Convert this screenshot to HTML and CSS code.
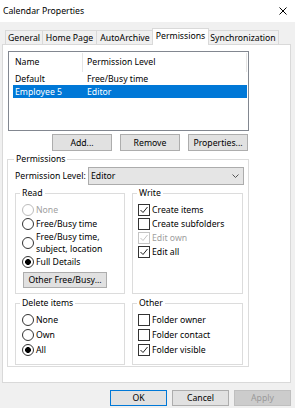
FILE: index.html
```html
<!DOCTYPE html>
<html>
<head>
<meta charset="utf-8">
<link rel="stylesheet" href="styles.css">
</head>
<body>
<div class="window">
  <div class="titlebar">
    <span class="title">Calendar Properties</span>
    <svg class="close" viewBox="0 0 8 8"><path d="M0.5 0.5 L7.5 7.5 M7.5 0.5 L0.5 7.5" stroke="#000" stroke-width="1" fill="none"/></svg>
  </div>
  <div class="main">
    <div class="tabs">
      <div class="tab t-general">General</div>
      <div class="tab t-home">Home Page</div>
      <div class="tab t-auto">AutoArchive</div>
      <div class="tab active t-perm">Permissions</div>
      <div class="tab t-sync">Synchronization</div>
    </div>
    <div class="panel">
      <div class="list">
        <div class="list-head">
          <div class="c1 hcol">Name</div>
          <div class="c2 hcol">Permission Level</div>
        </div>
        <div class="row">
          <div class="c1">Default</div>
          <div class="c2">Free/Busy time</div>
        </div>
        <div class="row sel">
          <div class="c1">Employee 5</div>
          <div class="c2">Editor</div>
        </div>
      </div>
      <div class="list-buttons">
        <button class="btn">Add...</button>
        <button class="btn">Remove</button>
        <button class="btn">Properties...</button>
      </div>
      <fieldset class="group perms">
        <legend>Permissions</legend>
        <div class="level-row">
          <span class="level-label">Permission Level:</span>
          <div class="select">
            <span>Editor</span>
            <svg class="chev" viewBox="0 0 7 4"><path d="M0.5 0.5 L3.5 3.5 L6.5 0.5" stroke="#555" stroke-width="1" fill="none"/></svg>
          </div>
        </div>
        <div class="grid">
          <fieldset class="group sub read">
            <legend>Read</legend>
            <div class="opts">
              <div class="opt dis"><span class="radio"></span><span>None</span></div>
              <div class="opt"><span class="radio"></span><span>Free/Busy time</span></div>
              <div class="opt two"><span class="radio"></span><span>Free/Busy time,<br>subject, location</span></div>
              <div class="opt"><span class="radio on"></span><span>Full Details</span></div>
              <button class="btn other-btn">Other Free/Busy...</button>
            </div>
          </fieldset>
          <fieldset class="group sub write">
            <legend>Write</legend>
            <div class="opts">
              <div class="opt ck"><span class="check"><svg viewBox="0 0 10 10"><path d="M1.5 5 L4 7.5 L8.5 2" stroke="#222" stroke-width="1" fill="none"/></svg></span><span>Create items</span></div>
              <div class="opt ck"><span class="check"></span><span>Create subfolders</span></div>
              <div class="opt ck dis"><span class="check"><svg viewBox="0 0 10 10"><path d="M1.5 5 L4 7.5 L8.5 2" stroke="#c4c4c4" stroke-width="1" fill="none"/></svg></span><span>Edit own</span></div>
              <div class="opt ck"><span class="check"><svg viewBox="0 0 10 10"><path d="M1.5 5 L4 7.5 L8.5 2" stroke="#222" stroke-width="1" fill="none"/></svg></span><span>Edit all</span></div>
            </div>
          </fieldset>
          <fieldset class="group sub del">
            <legend>Delete items</legend>
            <div class="opts wide">
              <div class="opt"><span class="radio"></span><span>None</span></div>
              <div class="opt"><span class="radio"></span><span>Own</span></div>
              <div class="opt"><span class="radio on"></span><span>All</span></div>
            </div>
          </fieldset>
          <fieldset class="group sub other">
            <legend>Other</legend>
            <div class="opts wide">
              <div class="opt ck"><span class="check"></span><span>Folder owner</span></div>
              <div class="opt ck"><span class="check"></span><span>Folder contact</span></div>
              <div class="opt ck"><span class="check"><svg viewBox="0 0 10 10"><path d="M1.5 5 L4 7.5 L8.5 2" stroke="#222" stroke-width="1" fill="none"/></svg></span><span>Folder visible</span></div>
            </div>
          </fieldset>
        </div>
      </fieldset>
    </div>
    <div class="footer">
      <button class="btn fbtn ok">OK</button>
      <button class="btn fbtn">Cancel</button>
      <button class="btn fbtn disabled">Apply</button>
    </div>
  </div>
</div>
</body>
</html>
```
FILE: styles.css
```css
* { box-sizing: border-box; }
html, body { margin: 0; padding: 0; }
body {
  background: #f0f0f0;
  font-family: "Noto Sans", "Open Sans", sans-serif;
  font-size: 8.7px;
  color: #000;
  width: 295px;
  height: 408px;
  overflow: hidden;
}
.titlebar {
  height: 22px;
  background: #fff;
  display: flex;
  align-items: center;
  justify-content: space-between;
  padding: 0 8px 0 3px;
}
.title { line-height: 12px; }
.close { width: 8px; height: 8px; display: block; }
.main { padding: 6px 4px 0 2px; }

.tabs {
  display: flex;
  align-items: flex-end;
  height: 16px;
  padding-left: 3px;
  position: relative;
  z-index: 1;
}
.tab {
  height: 14px;
  border: 1px solid #d9d9d9;
  border-bottom: none;
  margin-right: -1px;
  display: flex;
  align-items: center;
  justify-content: center;
  line-height: 12px;
  background: #f0f0f0;
  white-space: nowrap;
}
.t-general { width: 38px; }
.t-home { width: 55px; }
.t-auto { width: 58px; }
.t-perm { width: 57px; }
.t-sync { width: 72px; }
.tab.active {
  height: 17px;
  background: #fff;
  margin-bottom: -1px;
  margin-left: -1px;
  margin-right: -2px;
  padding-bottom: 2px;
  position: relative;
}

.panel {
  background: #fff;
  border: 1px solid #d9d9d9;
  height: 339px;
  padding: 6px 0 0 5px;
}
.list {
  width: 241px;
  height: 80px;
  border: 1px solid #828790;
  background: #fff;
}
.list-head, .row {
  display: flex;
  margin: 0 1px 0 4px;
}
.list-head { height: 20px; align-items: center; }
.row { height: 13px; align-items: center; line-height: 12px; }
.c1 { width: 70px; padding-left: 2px; white-space: nowrap; }
.c2 { flex: 1; padding-left: 4px; white-space: nowrap; }
.hcol { height: 19px; display: flex; align-items: center; }
.list-head .c1 { border-right: 1px solid #e5e5e5; }
.list-head .c2 { border-right: 1px solid #e5e5e5; }
.row.sel { background: #0078d7; color: #fff; }

.btn {
  font-family: inherit;
  font-size: 8.7px;
  color: #000;
  background: #e1e1e1;
  border: 1px solid #adadad;
  padding: 0;
  margin: 0;
  height: 17px;
  line-height: 12px;
}
.list-buttons {
  display: flex;
  justify-content: flex-end;
  gap: 8px;
  width: 241px;
  padding-right: 1px;
  margin-top: 3px;
}
.list-buttons .btn { width: 60px; }

.group {
  border: 1px solid #dcdcdc;
  margin: 0;
  padding: 0;
  min-width: 0;
}
.group legend {
  padding: 0 2px;
  line-height: 12px;
  height: 12px;
}
.perms {
  width: 242px;
  margin: 2px 0 0 -1px;
  padding: 0 4px 1px 7px;
}
.perms > legend { margin-left: -1px; }
.level-row {
  display: flex;
  align-items: center;
  margin-top: 2px;
  height: 18px;
}
.level-label { width: 73px; flex: none; white-space: nowrap; }
.select {
  flex: 1;
  height: 18px;
  background: #e5e5e5;
  border: 1px solid #acacac;
  display: flex;
  align-items: center;
  justify-content: space-between;
  padding: 0 4px 0 2px;
}
.chev { width: 7px; height: 4px; display: block; }

.grid {
  display: grid;
  grid-template-columns: 110px 111px;
  column-gap: 7px;
  row-gap: 3px;
  margin-top: 2px;
}
.sub > legend { margin-left: 4px; }
.opts { padding: 4px 0 5px 6px; display: flex; flex-direction: column; }
.write .opts, .other .opts { padding-left: 5px; }
.opts.wide { padding-top: 3px; padding-bottom: 7px; }
.opt {
  display: flex;
  align-items: center;
  height: 14px;
  gap: 2px;
  line-height: 12px;
  white-space: nowrap;
}
.opts.wide .opt { height: 15px; }
.opt.two { height: 24px; }
.opt.ck { gap: 2px; }
.opt.dis { color: #a0a0a0; }
.radio {
  width: 12px;
  height: 12px;
  flex: none;
  border-radius: 50%;
  border: 1px solid #333;
  background: #fff;
}
.radio.on { background: radial-gradient(circle, #000 0 2.6px, #fff 3.2px); }
.opt.dis .radio { border-color: #bcbcbc; }
.check {
  width: 12px;
  height: 12px;
  flex: none;
  border: 1px solid #333;
  background: #fff;
  display: flex;
}
.check svg { width: 10px; height: 10px; display: block; }
.opt.dis .check { border-color: #c4c4c4; }
.other-btn {
  width: 84px;
  height: 16px;
  margin: 3px 0 0 1px;
}

.footer {
  display: flex;
  justify-content: flex-end;
  gap: 5px;
  margin-top: 7px;
}
.fbtn { height: 16px; width: 57px; }
.fbtn.ok { border-color: #0078d7; }
.fbtn.disabled { background: #cccccc; border-color: #bfbfbf; color: #9a9a9a; }
```
